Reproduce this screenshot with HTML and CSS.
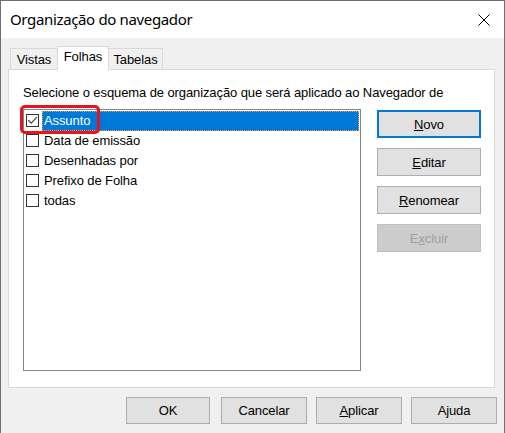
FILE: index.html
```html
<!DOCTYPE html>
<html lang="pt">
<head>
<meta charset="utf-8">
<title>Organização do navegador</title>
<link rel="stylesheet" href="styles.css">
</head>
<body>
<div class="window">
  <div class="titlebar">
    <span class="title">Organização do navegador</span>
    <svg class="close" width="12" height="12" viewBox="0 0 12 12"><path d="M0.5 0.5 L11.5 11.5 M11.5 0.5 L0.5 11.5" stroke="#000" stroke-width="1" fill="none"/></svg>
  </div>
  <div class="content">
    <div class="tabs">
      <div class="tab t-vistas">Vistas</div>
      <div class="tab active t-folhas">Folhas</div>
      <div class="tab t-tabelas">Tabelas</div>
    </div>
    <div class="panel">
      <div class="desc">Selecione o esquema de organização que será aplicado ao Navegador de</div>
      <div class="main">
        <div class="list">
          <div class="row selected"><span class="cb checked"><svg width="11" height="11" viewBox="0 0 11 11"><path d="M1.2 5.2 L4.2 8.2 L10 2.2" stroke="#444" stroke-width="1.2" fill="none"/></svg></span><span class="label">Assunto</span></div>
          <div class="row"><span class="cb"></span><span class="label">Data de emissão</span></div>
          <div class="row"><span class="cb"></span><span class="label">Desenhadas por</span></div>
          <div class="row"><span class="cb"></span><span class="label">Prefixo de Folha</span></div>
          <div class="row"><span class="cb"></span><span class="label">todas</span></div>
          <div class="highlight"></div>
        </div>
        <div class="side">
          <button class="btn default"><u>N</u>ovo</button>
          <button class="btn"><u>E</u>ditar</button>
          <button class="btn"><u>R</u>enomear</button>
          <button class="btn disabled">E<u>x</u>cluir</button>
        </div>
      </div>
    </div>
    <div class="footer">
      <button class="btn fbtn ok">OK</button>
      <button class="btn fbtn cancel">Cancelar</button>
      <button class="btn fbtn"><u>A</u>plicar</button>
      <button class="btn fbtn">Ajuda</button>
    </div>
  </div>
</div>
</body>
</html>
```
FILE: styles.css
```css
html, body {
  margin: 0;
  padding: 0;
  background: #f0f0f0;
}
.window {
  width: 505px;
  height: 433px;
  box-sizing: border-box;
  border: 1px solid #6f6f6f;
  border-bottom: none;
  background: #f0f0f0;
  display: flex;
  flex-direction: column;
  font-family: "Liberation Sans", Arial, sans-serif;
  font-size: 13px;
  letter-spacing: -0.1px;
  color: #000;
}
.titlebar {
  height: 37px;
  background: #fff;
  display: flex;
  align-items: center;
  justify-content: space-between;
  padding: 0 14px 0 9px;
  flex: none;
}
.title {
  font-family: "Noto Sans", "Open Sans", sans-serif;
  font-size: 15px;
  letter-spacing: -0.35px;
  margin-top: -1px;
}
.close {
  display: block;
}
.content {
  padding: 8px 9px 0 7px;
  display: flex;
  flex-direction: column;
}
.tabs {
  display: flex;
  align-items: flex-end;
  height: 23px;
  padding-left: 2px;
  position: relative;
  z-index: 1;
}
.tab {
  box-sizing: border-box;
  height: 21px;
  border: 1px solid #d9d9d9;
  border-bottom: none;
  background: #f0f0f0;
  padding: 3px 0 0 0;
  text-align: center;
  line-height: 16px;
}
.t-vistas { width: 47px; border-right: none; }
.t-folhas { width: 52px; }
.t-tabelas { width: 54px; border-left: none; }
.tab.active {
  height: 24px;
  background: #fff;
  margin-bottom: -1px;
  padding-top: 2px;
}
.panel {
  box-sizing: border-box;
  height: 319px;
  background: #fff;
  border: 1px solid #d9d9d9;
  padding: 15px 13px 0 14px;
}
.desc {
  line-height: 16px;
  height: 16px;
  white-space: nowrap;
}
.main {
  display: flex;
  margin-top: 8px;
}
.list {
  position: relative;
  box-sizing: border-box;
  width: 338px;
  height: 262px;
  border: 1px solid #828790;
  padding: 1px 1px 0 2px;
}
.row {
  display: flex;
  height: 20px;
  align-items: flex-start;
}
.cb {
  box-sizing: border-box;
  width: 13px;
  height: 13px;
  border: 1px solid #333;
  background: #fff;
  margin-top: 3px;
  flex: none;
  display: flex;
  align-items: center;
  justify-content: center;
}
.cb svg { display: block; }
.label {
  margin-left: 3px;
  padding-left: 2px;
  line-height: 20px;
  height: 20px;
  box-sizing: border-box;
}
.row.selected .label {
  flex: 1;
  background: #0078d7;
  color: #fff;
  border: 1px dotted #ff9a2e;
  line-height: 18px;
  padding-left: 1px;
}
.highlight {
  position: absolute;
  left: -4px;
  top: -5px;
  width: 80px;
  height: 29px;
  box-sizing: border-box;
  border: 3px solid #e8141c;
  border-radius: 5px;
}
.side {
  display: flex;
  flex-direction: column;
  gap: 10px;
  margin-left: 16px;
  margin-top: 1px;
}
.btn {
  box-sizing: border-box;
  font-family: "Liberation Sans", Arial, sans-serif;
  font-size: 13px;
  letter-spacing: -0.1px;
  color: #000;
  background: #e1e1e1;
  border: 1px solid #adadad;
  border-radius: 0;
  padding: 0;
  margin: 0;
  width: 104px;
  height: 28px;
}
.btn.default {
  border: 2px solid #0078d7;
}
.btn.disabled {
  background: #cccccc;
  border-color: #bfbfbf;
  color: #a0a0a0;
}
.footer {
  display: flex;
  justify-content: flex-end;
  gap: 9px;
  margin-top: 9px;
  margin-right: -2px;
}
.fbtn {
  width: 86px;
  height: 27px;
}
.fbtn.ok {
  width: 84px;
}
.fbtn.cancel {
  margin-left: 2px;
}
```
